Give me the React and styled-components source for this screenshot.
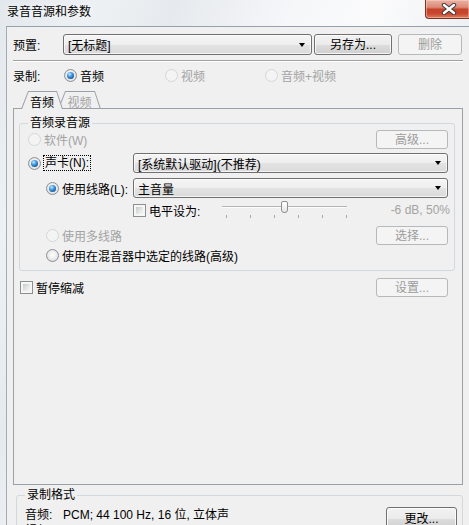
import React from "react"
import styled, { createGlobalStyle } from "styled-components"

const GlobalStyle = createGlobalStyle`
  html, body {
    margin: 0;
    padding: 0;
    background: #f0f0f0;
  }
  body {
    font-family: "Liberation Sans", "Noto Sans CJK SC", sans-serif;
    font-size: 12px;
    color: #000;
  }
  * {
    box-sizing: border-box;
  }
`

function Radio({ checked, disabled, indent, focus, children }) {
  return (
    <Option $disabled={disabled} $indent={indent}>
      <RadioDot $checked={checked} $disabled={disabled} />
      {focus ? <Focus>{children}</Focus> : <span>{children}</span>}
    </Option>
  )
}

function Check({ disabled, children }) {
  return (
    <Option $disabled={disabled}>
      <CheckBox />
      <span>{children}</span>
    </Option>
  )
}

function LevelSlider({ value }) {
  const ticks = [0, 1, 2, 3, 4, 5]
  return (
    <Slider>
      <TrackArea>
        <Track />
        <Thumb style={{ left: `${Math.round(value * 118)}px` }} />
      </TrackArea>
      <Ticks>
        {ticks.map((t) => (
          <Tick key={t} />
        ))}
      </Ticks>
    </Slider>
  )
}

function App() {
  return (
    <>
      <GlobalStyle />
      <Window>
        <TitleBar>
          <Title>录音音源和参数</Title>
          <CloseButton>
            <svg width="16" height="12" viewBox="0 0 16 12">
              <path d="M3 2 L13 10 M13 2 L3 10" stroke="#3c3c3c" strokeWidth="4.4" strokeLinecap="round" />
              <path d="M3 2 L13 10 M13 2 L3 10" stroke="#fff" strokeWidth="2.4" strokeLinecap="round" />
            </svg>
          </CloseButton>
        </TitleBar>
        <Body>
          <PresetRow>
            <FieldLabel $w={50}>预置:</FieldLabel>
            <Combo $w={249} $h={21}>[无标题]</Combo>
            <Button $w={78} $h={21} $ml={2}>另存为...</Button>
            <Button $w={64} $h={21} $ml={6} disabled>
              删除
            </Button>
          </PresetRow>
          <Separator />
          <RecordRow>
            <span>录制:</span>
            <Radio checked>音频</Radio>
            <Radio disabled>视频</Radio>
            <Radio disabled>音频+视频</Radio>
          </RecordRow>
          <TabStrip>
            <Tab $w={42} $active>
              音频
            </Tab>
            <Tab $w={43}>视频</Tab>
          </TabStrip>
          <TabPanel>
            <GroupBox>
              <GroupTitle>音频录音源</GroupTitle>
              <Row $h={19}>
                <LeftCell>
                  <Radio disabled>软件(W)</Radio>
                </LeftCell>
                <Button $w={72} $h={19} $push disabled>
                  高级...
                </Button>
              </Row>
              <Row $h={20} $mt={4}>
                <LeftCell>
                  <Radio checked focus>
                    声卡(N):
                  </Radio>
                </LeftCell>
                <Combo $h={20}>[系统默认驱动](不推荐)</Combo>
              </Row>
              <Row $h={20} $mt={5}>
                <LeftCell>
                  <Radio checked indent={18}>
                    使用线路(L):
                  </Radio>
                </LeftCell>
                <Combo $h={20}>主音量</Combo>
              </Row>
              <Row $h={20} $mt={2}>
                <LeftCell />
                <LevelCheck>
                  <Check>电平设为:</Check>
                </LevelCheck>
                <LevelSlider value={0.5} />
                <LevelValue>-6 dB, 50%</LevelValue>
              </Row>
              <Row $h={19} $mt={6}>
                <LeftCell>
                  <Radio disabled indent={18}>
                    使用多线路
                  </Radio>
                </LeftCell>
                <Button $w={72} $h={19} $push disabled>
                  选择...
                </Button>
              </Row>
              <Row $h={18} $mt={1}>
                <Radio indent={18}>使用在混音器中选定的线路(高级)</Radio>
              </Row>
            </GroupBox>
            <PauseRow>
              <Check>暂停缩减</Check>
              <Button $w={72} $h={19} $push disabled>
                设置...
              </Button>
            </PauseRow>
          </TabPanel>
          <FormatBox>
            <GroupTitle>录制格式</GroupTitle>
            <FormatGrid>
              <span>音频:</span>
              <span>PCM; 44 100 Hz, 16 位, 立体声</span>
              <ChangeButton $w={71} $h={23}>
                更改...
              </ChangeButton>
              <span>视频:</span>
              <span />
            </FormatGrid>
          </FormatBox>
        </Body>
      </Window>
    </>
  )
}

const Window = styled.div`
  width: 469px;
  height: 525px;
  overflow: hidden;
  display: flex;
  flex-direction: column;
  background: linear-gradient(
    112deg,
    #e3e8ed 0%,
    #eef1f4 14%,
    #e6eaee 26%,
    #f6f7f9 44%,
    #fbfbfc 56%,
    #eef1f3 70%,
    #f4f6f7 84%,
    #e6eaee 100%
  );
`

const TitleBar = styled.div`
  height: 26px;
  flex: none;
  display: flex;
  justify-content: space-between;
  align-items: flex-start;
  padding-left: 7px;
`

const Title = styled.div`
  padding-top: 4px;
  line-height: 17px;
  font-size: 12px;
  color: #000;
  text-shadow: 0 0 6px #fff;
`

const CloseButton = styled.div`
  width: 44px;
  height: 19px;
  display: flex;
  align-items: center;
  justify-content: center;
  padding-left: 3px;
  border: 1px solid #7a3326;
  border-top: none;
  border-right: none;
  border-radius: 0 0 0 4px;
  background: linear-gradient(
    #eab2a4 0%,
    #dd8a76 40%,
    #c4432a 52%,
    #c8482e 75%,
    #df7a5d 100%
  );
  box-shadow: inset 0 0 0 1px rgba(255, 220, 210, 0.45);
`

const Body = styled.div`
  flex: 1;
  margin-left: 6px;
  background: #f0f0f0;
  border-top: 1px solid #97a1ab;
  border-left: 1px solid #a3acb5;
  padding: 7px 6px 0 6px;
  display: flex;
  flex-direction: column;
`

const PresetRow = styled.div`
  display: flex;
  align-items: center;
  height: 21px;
  flex: none;
`

const FieldLabel = styled.span`
  width: ${(p) => p.$w}px;
  flex: none;
`

const Combo = styled.div`
  display: flex;
  align-items: center;
  width: ${(p) => (p.$w ? `${p.$w}px` : "auto")};
  flex: ${(p) => (p.$w ? "none" : 1)};
  height: ${(p) => p.$h}px;
  padding: 0 5px 0 4px;
  border: 1px solid #707070;
  border-radius: 3px;
  background: linear-gradient(#f5f5f5 0%, #eeeeee 50%, #e3e3e3 51%, #dadada 100%);
  box-shadow: inset 0 0 0 1px rgba(255, 255, 255, 0.7);
  white-space: nowrap;
  &::after {
    content: "";
    margin-left: auto;
    margin-right: 1px;
    border-left: 3.5px solid transparent;
    border-right: 3.5px solid transparent;
    border-top: 4px solid #000;
  }
`

const Button = styled.button`
  flex: none;
  width: ${(p) => p.$w}px;
  height: ${(p) => p.$h}px;
  margin-left: ${(p) => (p.$push ? "auto" : `${p.$ml || 0}px`)};
  padding: 0;
  font: inherit;
  line-height: 1;
  border-radius: 3px;
  border: 1px solid ${(p) => (p.disabled ? "#b5b9bc" : "#707070")};
  color: ${(p) => (p.disabled ? "#9c9c9c" : "#000")};
  background: ${(p) =>
    p.disabled
      ? "#f4f4f4"
      : "linear-gradient(#f2f2f2 0%, #ebebeb 50%, #dddddd 51%, #cfcfcf 100%)"};
  box-shadow: ${(p) =>
    p.disabled ? "none" : "inset 0 0 0 1px rgba(255, 255, 255, 0.8)"};
`

const Separator = styled.div`
  flex: none;
  margin-top: 5px;
  height: 2px;
  border-top: 1px solid #a0a0a0;
  border-bottom: 1px solid #fff;
`

const RecordRow = styled.div`
  flex: none;
  margin-top: 5px;
  height: 16px;
  display: grid;
  grid-template-columns: 51px 101px 100px 1fr;
  align-items: center;
`

const Option = styled.label`
  display: inline-flex;
  align-items: center;
  gap: 3px;
  padding-left: ${(p) => p.$indent || 0}px;
  color: ${(p) => (p.$disabled ? "#a3a3a3" : "#000")};
  white-space: nowrap;
`

const RadioDot = styled.span`
  flex: none;
  width: 13px;
  height: 13px;
  border-radius: 50%;
  display: flex;
  align-items: center;
  justify-content: center;
  border: 1px solid ${(p) => (p.$disabled ? "#d4d6d8" : "#8b9096")};
  background: ${(p) =>
    p.$disabled
      ? "#f4f4f4"
      : "radial-gradient(circle at 50% 45%, #ffffff 0%, #eeeeee 45%, #cfd1d3 100%)"};
  &::after {
    content: "";
    display: ${(p) => (p.$checked ? "block" : "none")};
    width: 7px;
    height: 7px;
    border-radius: 50%;
    background: radial-gradient(
      circle at 38% 32%,
      #c6ecff 0%,
      #49a2e6 35%,
      #17589c 75%,
      #0d3f75 100%
    );
  }
`

const CheckBox = styled.span`
  flex: none;
  width: 13px;
  height: 13px;
  padding: 2px;
  border: 1px solid #8e8f8f;
  background: linear-gradient(135deg, #c5c8cc 0%, #e4e5e6 55%, #f6f6f6 100%) content-box,
    #f6f6f6;
`

const Focus = styled.span`
  outline: 1px dotted #000;
  outline-offset: 0;
  padding: 0 1px;
  line-height: 14px;
`

const TabStrip = styled.div`
  flex: none;
  position: relative;
  z-index: 1;
  display: flex;
  align-items: flex-end;
  margin-top: 8px;
  margin-bottom: -1px;
  padding-left: 8px;
`

const Tab = styled.div`
  position: relative;
  z-index: ${(p) => (p.$active ? 2 : 1)};
  width: ${(p) => p.$w}px;
  height: 18px;
  margin-left: ${(p) => (p.$active ? 0 : -5)}px;
  display: flex;
  align-items: center;
  justify-content: center;
  padding-top: 2px;
  color: ${(p) => (p.$active ? "#000" : "#a3a3a3")};
  &::before,
  &::after {
    content: "";
    position: absolute;
    inset: 0;
    z-index: -1;
  }
  &::before {
    background: #9ba1a7;
    clip-path: polygon(0 100%, 7px 0, calc(100% - 6px) 0, 100% 100%);
  }
  &::after {
    background: #f0f0f0;
    clip-path: ${(p) =>
      p.$active
        ? "polygon(1.1px 100%, 7.6px 1px, calc(100% - 6.6px) 1px, calc(100% - 1.1px) 100%)"
        : "polygon(1.4px calc(100% - 1px), 7.6px 1px, calc(100% - 6.6px) 1px, calc(100% - 1.4px) calc(100% - 1px))"};
  }
`

const TabPanel = styled.div`
  flex: none;
  height: 377px;
  border: 1px solid #9ba1a7;
  background: #f0f0f0;
  padding: 7px 7px 0 5px;
  display: flex;
  flex-direction: column;
`

const GroupBox = styled.fieldset`
  margin: 0;
  min-width: 0;
  border: 1px solid #d3d8dc;
  border-radius: 3px;
  padding: 0 6px 6px 8px;
  display: flex;
  flex-direction: column;
`

const GroupTitle = styled.legend`
  padding: 0 2px;
  line-height: 14px;
`

const Row = styled.div`
  display: flex;
  align-items: center;
  height: ${(p) => p.$h}px;
  margin-top: ${(p) => p.$mt || 0}px;
`

const LeftCell = styled.div`
  width: 105px;
  flex: none;
  display: flex;
  align-items: center;
`

const LevelCheck = styled.div`
  width: 89px;
  flex: none;
  display: flex;
`

const Slider = styled.div`
  width: 125px;
  height: 20px;
  flex: none;
  display: flex;
  flex-direction: column;
`

const TrackArea = styled.div`
  position: relative;
  height: 15px;
  padding-top: 6px;
`

const Track = styled.div`
  height: 2px;
  border-top: 1px solid #b4b4b4;
  border-bottom: 1px solid #fdfdfd;
`

const Thumb = styled.div`
  position: absolute;
  top: 1px;
  width: 7px;
  height: 12px;
  border: 1px solid #8f8f8f;
  border-radius: 2px 2px 3px 3px;
  background: linear-gradient(#ffffff, #e4e4e4);
`

const Ticks = styled.div`
  display: flex;
  justify-content: space-between;
  padding-left: 4px;
`

const Tick = styled.span`
  width: 1px;
  height: 3px;
  background: #a8a8a8;
`

const LevelValue = styled.span`
  margin-left: auto;
  margin-right: -2px;
  color: #a3a3a3;
`

const PauseRow = styled.div`
  display: flex;
  align-items: center;
  height: 19px;
  margin-top: 7px;
  padding: 0 7px 0 1px;
`

const FormatBox = styled.fieldset`
  flex: none;
  margin: 3px 0 0 3px;
  min-width: 0;
  border: 1px solid #d3d8dc;
  border-radius: 3px;
  padding: 3px 5px 0 8px;
`

const FormatGrid = styled.div`
  display: grid;
  grid-template-columns: 38px 1fr auto;
  grid-auto-rows: 16px;
  align-items: center;
  white-space: nowrap;
`

const ChangeButton = styled(Button)`
  grid-column: 3;
  grid-row: 1 / span 2;
  align-self: start;
  margin-top: 2px;
`

export default App
